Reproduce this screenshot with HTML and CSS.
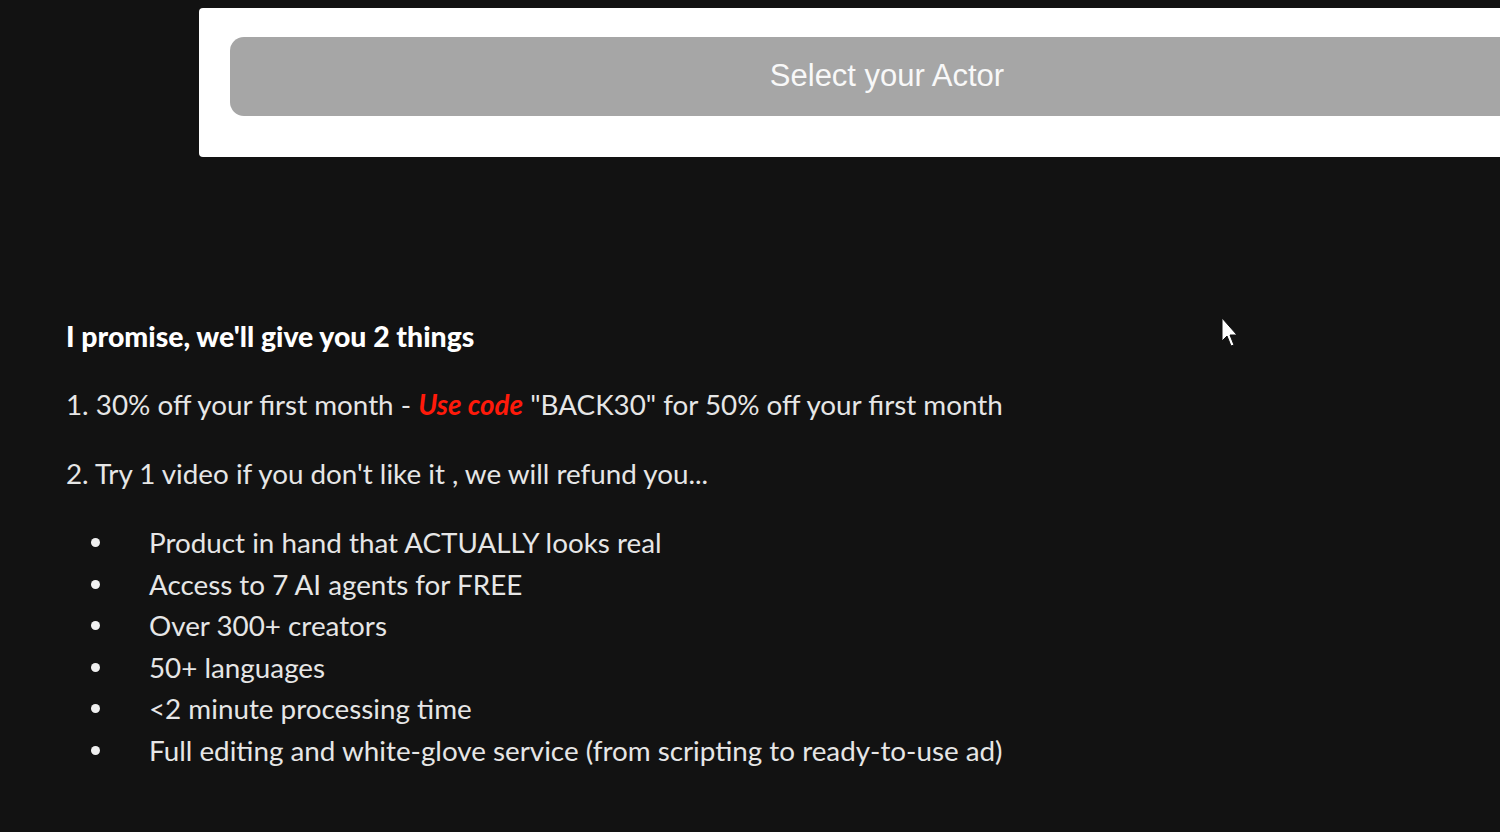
FILE: index.html
```html
<!DOCTYPE html>
<html>
<head>
<meta charset="utf-8">
<link rel="stylesheet" href="styles.css">
</head>
<body>
<div class="page">
  <div class="card">
    <button class="actor-btn">Select your Actor</button>
  </div>
  <div class="content">
    <p class="heading">I promise, we'll give you 2 things</p>
    <p class="line">1. 30% off your first month - <em class="code">Use code</em> "BACK30" for 50% off your first month</p>
    <p class="line">2. Try 1 video if you don't like it , we will refund you...</p>
    <ul class="perks">
      <li>Product in hand that ACTUALLY looks real</li>
      <li>Access to 7 AI agents for FREE</li>
      <li>Over 300+ creators</li>
      <li>50+ languages</li>
      <li>&lt;2 minute processing time</li>
      <li>Full editing and white-glove service (from scripting to ready-to-use ad)</li>
    </ul>
  </div>
  <svg class="cursor" width="20" height="32" viewBox="0 0 20 32">
    <path d="M1 1 L1 24 L6 19 L10 29 L13 28 L9 18 L16 18 Z" fill="#ffffff" stroke="#111" stroke-width="1"/>
  </svg>
</div>
</body>
</html>
```

FILE: styles.css
```css
html, body {
  margin: 0;
  padding: 0;
  background: #121212;
  overflow: hidden;
}
.page {
  position: relative;
  width: 1500px;
  height: 832px;
  overflow: hidden;
}
.card {
  margin: 8px 0 0 199px;
  width: 1380px;
  height: 149px;
  box-sizing: border-box;
  background: #ffffff;
  border-radius: 4px;
  padding: 29px 31px 0 31px;
}
.actor-btn {
  display: block;
  width: 1314px;
  height: 79px;
  border: none;
  border-radius: 14px;
  background: #a6a6a6;
  color: #f8f8f8;
  font-family: "Liberation Sans", Arial, sans-serif;
  font-size: 31px;
  padding: 0 0 2px 0;
  text-align: center;
}
.content {
  padding: 163px 0 0 66px;
  color: #e6e6e6;
  font-family: Lato, "Open Sans", sans-serif;
  font-size: 27.8px;
}
.heading {
  margin: 0;
  font-weight: 900;
  color: #ffffff;
  font-size: 28.4px;
  line-height: 32px;
}
.line {
  margin: 37px 0 0 0;
  line-height: 32px;
}
.code {
  color: #ff1a0a;
  font-weight: 700;
  font-style: italic;
}
.perks {
  margin: 32px 0 0 0;
  padding: 0 0 0 25px;
  list-style: none;
}
.perks li {
  display: flex;
  align-items: center;
  gap: 49px;
  line-height: 41.5px;
}
.perks li::before {
  content: "";
  width: 9px;
  height: 9px;
  border-radius: 50%;
  background: #f0f0f0;
  flex: none;
}
.cursor {
  position: absolute;
  left: 1221px;
  top: 317px;
}
```
